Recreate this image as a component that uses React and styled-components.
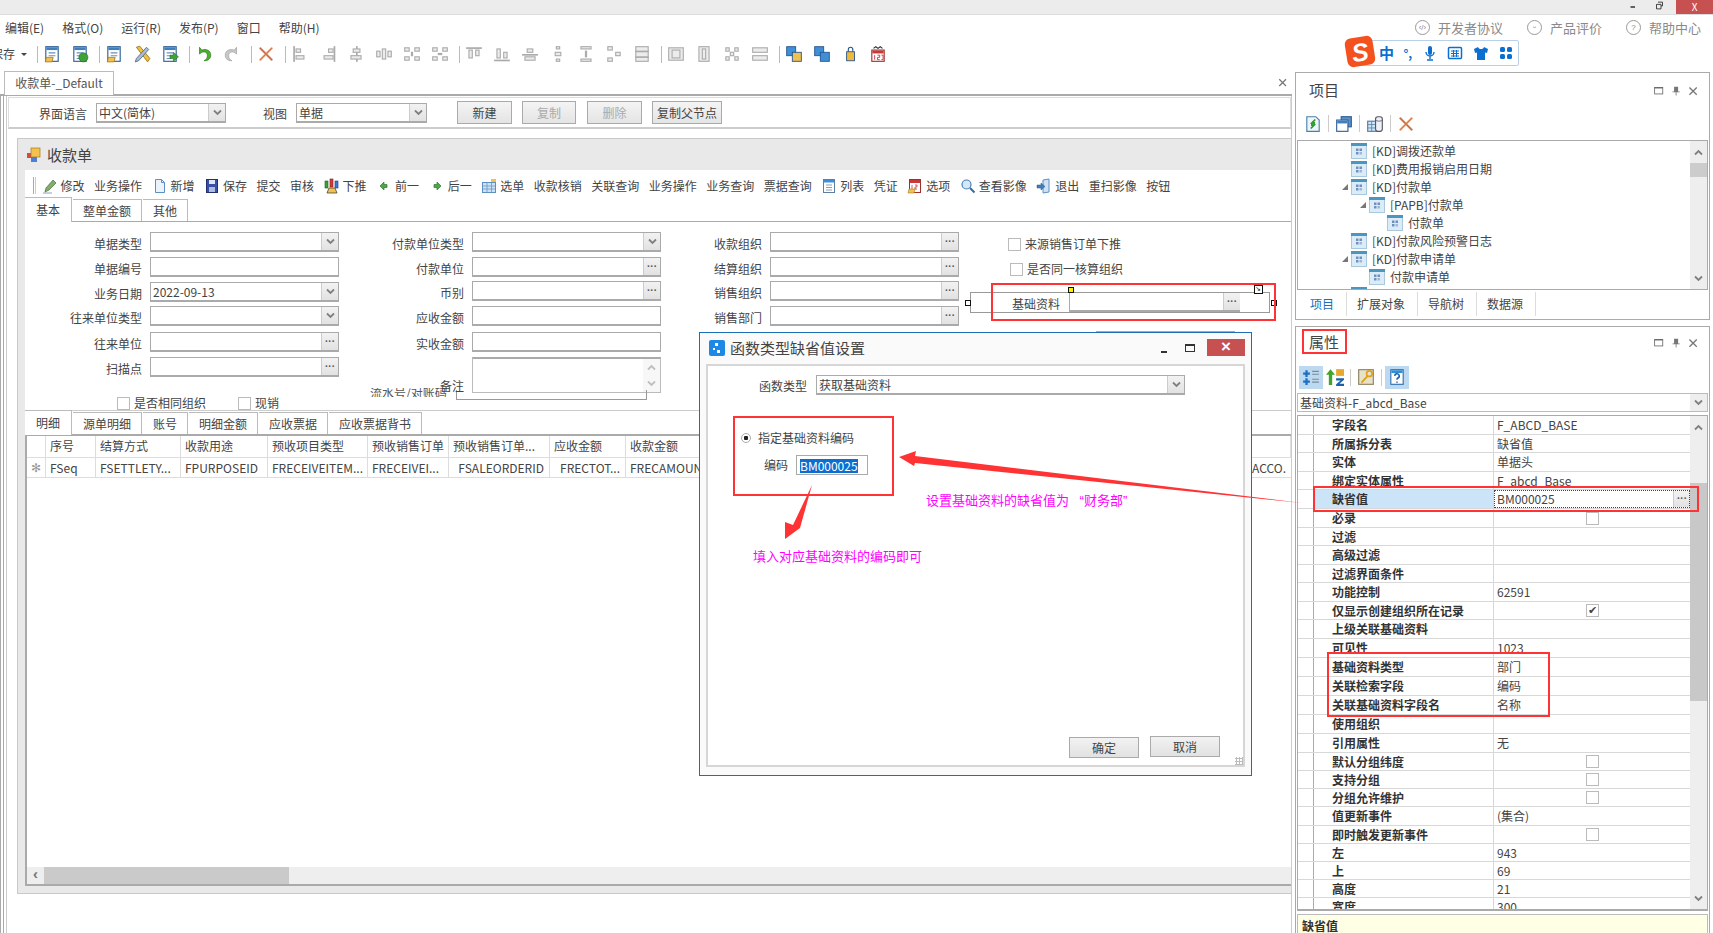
import React from 'react';
import styled, { createGlobalStyle } from 'styled-components';

const GlobalStyle = createGlobalStyle`
  html, body { margin: 0; padding: 0; background: #fff; }
  * { box-sizing: border-box; }
`;

// ---------- data ----------
const MENUS = ['编辑(E)', '格式(O)', '运行(R)', '发布(P)', '窗口', '帮助(H)'];

const DOC_TOOLS = [
  { icon: 'pencil', text: '修改' },
  { text: '业务操作' },
  { icon: 'page', text: '新增' },
  { icon: 'save', text: '保存' },
  { text: '提交' },
  { text: '审核' },
  { icon: 'push', text: '下推' },
  { icon: 'left', text: '前一' },
  { icon: 'right', text: '后一' },
  { icon: 'table', text: '选单' },
  { text: '收款核销' },
  { text: '关联查询' },
  { text: '业务操作' },
  { text: '业务查询' },
  { text: '票据查询' },
  { icon: 'form', text: '列表' },
  { text: '凭证' },
  { icon: 'calendar', text: '选项' },
  { icon: 'search', text: '查看影像' },
  { icon: 'exit', text: '退出' },
  { text: '重扫影像' },
  { text: '按钮' },
];

const COL_ONE = [
  { label: '单据类型', kind: 'combo', mt: 0 },
  { label: '单据编号', kind: 'text', mt: 5 },
  { label: '业务日期', kind: 'combo', value: '2022-09-13', mt: 5 },
  { label: '往来单位类型', kind: 'combo', mt: 4 },
  { label: '往来单位', kind: 'lookup', mt: 6 },
  { label: '扫描点', kind: 'lookup', mt: 5 },
];

const COL_TWO = [
  { label: '付款单位类型', kind: 'combo', mt: 0 },
  { label: '付款单位', kind: 'lookup', mt: 5 },
  { label: '币别', kind: 'lookup', mt: 4 },
  { label: '应收金额', kind: 'text', mt: 5 },
  { label: '实收金额', kind: 'text', mt: 6 },
];

const COL_THREE = [
  { label: '收款组织', kind: 'lookup', mt: 0 },
  { label: '结算组织', kind: 'lookup', mt: 5 },
  { label: '销售组织', kind: 'lookup', mt: 4 },
  { label: '销售部门', kind: 'lookup', mt: 5 },
];

const DETAIL_COLS = [
  { w: 19, head: '', cell: '✻', center: true, dim: true },
  { w: 50, head: '序号', cell: 'FSeq' },
  { w: 85, head: '结算方式', cell: 'FSETTLETY...' },
  { w: 87, head: '收款用途', cell: 'FPURPOSEID' },
  { w: 100, head: '预收项目类型', cell: 'FRECEIVEITEM...' },
  { w: 81, head: '预收销售订单', cell: 'FRECEIVEI...' },
  { w: 101, head: '预收销售订单...', cell: 'FSALEORDERID', right: true },
  { w: 76, head: '应收金额', cell: 'FRECTOT...', right: true },
  { w: 90, head: '收款金额', cell: 'FRECAMOUNTFOR' },
  { w: 480, head: '', cell: '' },
  { w: 95, head: '', cell: 'FBANKACCO.', right: true },
];

const TREE = [
  { level: 0, text: '[KD]调拨还款单' },
  { level: 0, text: '[KD]费用报销启用日期' },
  { level: 0, text: '[KD]付款单', open: true },
  { level: 1, text: '[PAPB]付款单', open: true },
  { level: 2, text: '付款单' },
  { level: 0, text: '[KD]付款风险预警日志' },
  { level: 0, text: '[KD]付款申请单', open: true },
  { level: 1, text: '付款申请单' },
  { level: 0, text: '' },
];

const PROPS = [
  { name: '字段名', value: 'F_ABCD_BASE', h: 19 },
  { name: '所属拆分表', value: '缺省值', h: 18 },
  { name: '实体', value: '单据头', h: 19 },
  { name: '绑定实体属性', value: 'F_abcd_Base', h: 18 },
  { name: '缺省值', value: 'BM000025', h: 19, editing: true },
  { name: '必录', check: 'off', h: 19 },
  { name: '过滤', h: 18 },
  { name: '高级过滤', h: 19 },
  { name: '过滤界面条件', h: 18 },
  { name: '功能控制', value: '62591', h: 19 },
  { name: '仅显示创建组织所在记录', check: 'on', h: 18 },
  { name: '上级关联基础资料', h: 19 },
  { name: '可见性', value: '1023', h: 19 },
  { name: '基础资料类型', value: '部门', h: 19 },
  { name: '关联检索字段', value: '编码', h: 19 },
  { name: '关联基础资料字段名', value: '名称', h: 19 },
  { name: '使用组织', h: 19 },
  { name: '引用属性', value: '无', h: 19 },
  { name: '默认分组纬度', check: 'off', h: 18 },
  { name: '支持分组', check: 'off', h: 18 },
  { name: '分组允许维护', check: 'off', h: 18 },
  { name: '值更新事件', value: '(集合)', h: 19 },
  { name: '即时触发更新事件', check: 'off', h: 18 },
  { name: '左', value: '943', h: 18 },
  { name: '上', value: '69', h: 18 },
  { name: '高度', value: '21', h: 18 },
  { name: '宽度', value: '300', h: 18 },
];

// ---------- icons ----------
const Svg = ({ size = 16, children }) => (
  <svg width={size} height={size} viewBox="0 0 16 16" style={{ display: 'block', flexShrink: 0 }}>
    {children}
  </svg>
);

const GREY_ALIGN = [
  [[2, 1, 1, 14], [4, 3, 5, 4], [4, 9, 8, 4]],
  [[13, 1, 1, 14], [8, 3, 5, 4], [4, 9, 9, 4]],
  [[8, 1, 1, 14], [5, 3, 7, 4], [3, 9, 10, 4]],
  [[1, 5, 4, 6], [6, 3, 4, 10], [11, 5, 4, 6]],
  [[1, 2, 5, 4], [10, 2, 5, 4], [1, 10, 5, 4], [10, 10, 5, 4], [7, 6, 2, 4]],
  [[1, 2, 5, 4], [10, 2, 5, 4], [1, 10, 5, 4], [10, 10, 5, 4], [6, 7, 4, 2]],
  [[1, 2, 14, 1], [3, 4, 4, 8], [9, 4, 4, 6]],
  [[1, 13, 14, 1], [3, 3, 4, 9], [9, 6, 4, 6]],
  [[1, 8, 14, 1], [5, 3, 6, 4], [3, 10, 10, 4]],
  [[6, 1, 4, 3], [5, 6, 6, 4], [6, 12, 4, 3]],
  [[3, 1, 10, 3], [7, 5, 2, 6], [3, 12, 10, 3]],
  [[2, 1, 5, 4], [9, 6, 5, 4], [2, 11, 5, 4]],
  [[2, 1, 12, 14], [2, 5, 12, 1], [2, 10, 12, 1]],
  [[1, 2, 14, 12], [4, 4, 8, 8]],
  [[3, 1, 10, 14], [6, 3, 4, 10]],
  [[2, 2, 4, 4], [10, 2, 4, 4], [2, 10, 4, 4], [10, 10, 4, 4], [6, 6, 4, 4]],
  [[1, 2, 14, 5], [1, 9, 14, 5]],
];

const GreyAlign = ({ n }) => (
  <Svg size={18}>
    {GREY_ALIGN[n].map((r, i) => (
      <rect key={i} x={r[0] + 0.5} y={r[1] + 0.5} width={r[2] - 1 > 0 ? r[2] - 1 : 0.5} height={r[3] - 1 > 0 ? r[3] - 1 : 0.5} fill="#ececec" stroke="#ababab" />
    ))}
  </Svg>
);

const FormDoc = ({ badge }) => (
  <Svg size={18}>
    <rect x="2.5" y="1.5" width="11" height="13" fill="#fff" stroke="#2e5f94" />
    <rect x="3" y="2" width="10" height="2.5" fill="#3f7fc0" />
    <path d="M5 7h6M5 9.5h6M5 12h4" stroke="#6a8fb5" />
    {badge === 'folder' && <path d="M3 11h6l-1 4H2z" fill="#f2c14e" stroke="#a9781a" strokeWidth=".7" />}
    {badge === 'info' && <circle cx="11" cy="11" r="4" fill="#3fa33a" stroke="#1f6e1c" strokeWidth=".6" />}
    {badge === 'arrow' && <path d="M8 9h3V6.5L15.5 10.5 11 14.5V12H8z" fill="#3fa33a" stroke="#1f6e1c" strokeWidth=".5" />}
  </Svg>
);

const RefreshDoc = () => (
  <Svg size={18}>
    <path d="M2.500 1.500h8l3 3v10h-11z" fill="#eef6fb" stroke="#4a7fa8" />
    <path d="M10 4l-3 3h2v1.500M6 12l3-3H7V7.500" fill="none" stroke="#2e9a2e" strokeWidth="1.500" />
  </Svg>
);

const StackWindows = () => (
  <Svg size={18}>
    <rect x="5.500" y="1.500" width="9" height="9" fill="#5f8fc8" stroke="#2e5f94" />
    <rect x="1.500" y="4.500" width="10" height="10" fill="#fff" stroke="#2e5f94" />
    <rect x="2" y="5" width="9" height="2.500" fill="#3f7fc0" />
  </Svg>
);

const TableDb = () => (
  <Svg size={18}>
    <rect x="1.500" y="5.500" width="9" height="9" fill="#d4e4f4" stroke="#4a7fa8" />
    <path d="M1.500 8.500h9M1.500 11.500h9M5 5.500v9" stroke="#4a7fa8" strokeWidth=".7" />
    <rect x="8.500" y="1.500" width="6" height="13" rx="2" fill="#eef2f6" stroke="#556" />
    <path d="M8.500 4a3 1.500 0 0 0 6 0" fill="none" stroke="#556" strokeWidth=".7" />
  </Svg>
);

const Tools = () => (
  <Svg size={18}>
    <path d="M3 2l3-1 9 11-2 3z" fill="#f0c040" stroke="#8f6a10" strokeWidth=".7" />
    <path d="M12 2l2 2-9 10-3 1 1-3z" fill="#a9bcd4" stroke="#4a5f7c" strokeWidth=".7" />
  </Svg>
);

const Undo = ({ color, stroke }) => (
  <Svg size={18}>
    <path d="M4 2v6l2-1.5c3-1 5 0 5 3 0 2-1 3.5-3 4.5 4 0 6-2 6-5 0-4-4-6-8-4.5L4 2z" fill={color} stroke={stroke} strokeWidth=".6" />
  </Svg>
);

const Redo = () => (
  <Svg size={18}>
    <path d="M12 2v6l-2-1.5c-3-1-5 0-5 3 0 2 1 3.5 3 4.5-4 0-6-2-6-5 0-4 4-6 8-4.5L12 2z" fill="#c8c8c8" stroke="#a0a0a0" strokeWidth=".6" />
  </Svg>
);

const CrossOrange = () => (
  <Svg size={18}>
    <path d="M2.500 2.500l11 11" stroke="#d9855a" strokeWidth="2" />
    <path d="M13.500 2.500l-11 11" stroke="#e8a078" strokeWidth="2" />
    <path d="M2.500 2.500l11 11M13.500 2.500l-11 11" stroke="#b85a30" strokeWidth=".5" />
  </Svg>
);

const LayerIcon = ({ tone }) => (
  <Svg size={18}>
    <rect x={tone === 'lock' ? 5 : 1.5} y={tone === 'lock' ? 6 : 1.5} width={tone === 'lock' ? 7 : 8} height={tone === 'lock' ? 8 : 8} fill={tone === 'lock' ? '#f0b93a' : '#3f8fd8'} stroke="#27568c" strokeWidth=".8" />
    {tone === 'lock' && <path d="M6.500 6V4a2 2 0 0 1 4 0v2" fill="none" stroke="#27568c" />}
    {tone !== 'lock' && <rect x="6.500" y="6.500" width="8" height="8" fill={tone === 'b' ? '#3f8fd8' : '#f0c050'} stroke="#27568c" strokeWidth=".8" />}
  </Svg>
);

const CalendarIcon = () => (
  <Svg size={18}>
    <rect x="2.500" y="4.500" width="11" height="10" fill="#fff" stroke="#a03030" />
    <rect x="3" y="5" width="10" height="2.500" fill="#c83838" />
    <path d="M4 3l2-1.500L8 3l2-1.500L12 3" fill="none" stroke="#333" />
    <path d="M5 9v4M7.500 9h2v2h-2v2h2M11 9h1.500v4H11" fill="none" stroke="#c83838" strokeWidth=".8" />
  </Svg>
);

const DocToolIcon = ({ type }) => {
  switch (type) {
    case 'pencil':
      return <Svg><path d="M11 2l3 3-7 7-4 2 1-4z" fill="#7fb069" stroke="#4a6a3c" strokeWidth=".7" /><path d="M1 15h9" stroke="#8aa0b8" /></Svg>;
    case 'page':
      return <Svg><path d="M3.500 1.500h6l3 3v10h-9z" fill="#eaf3fc" stroke="#5d8fc2" /><path d="M9.500 1.500v3h3" fill="none" stroke="#5d8fc2" /></Svg>;
    case 'save':
      return <Svg><rect x="2.500" y="1.500" width="11" height="13" fill="#3a4fa8" stroke="#232f6e" /><rect x="5" y="2" width="6" height="4" fill="#dfe6f5" /><rect x="5" y="9" width="6" height="5" fill="#aebce0" /></Svg>;
    case 'push':
      return <Svg><rect x="1" y="3" width="3" height="7" fill="#3aa23a" stroke="#1c5e1c" strokeWidth=".6" /><rect x="6" y="1" width="3" height="8" fill="#d83a3a" stroke="#7e1b1b" strokeWidth=".6" /><rect x="11" y="3" width="3" height="7" fill="#3a7ad8" stroke="#1b3e7e" strokeWidth=".6" /><path d="M5 10h6l2 5H3z" fill="#f2c14e" stroke="#333" strokeWidth=".7" /></Svg>;
    case 'left':
      return <Svg><path d="M8 4v2.500h3v3H8V12L4 8z" fill="#4aa84a" stroke="#2e7a2e" strokeWidth=".7" /></Svg>;
    case 'right':
      return <Svg><path d="M8 4v2.500H5v3h3V12l4-4z" fill="#4aa84a" stroke="#2e7a2e" strokeWidth=".7" /></Svg>;
    case 'table':
      return <Svg><rect x="1.500" y="4.500" width="13" height="10" fill="#cfe2f5" stroke="#5d8fc2" /><path d="M1.500 8h13M1.500 11h13M6 4.500v10M10.500 4.500v10" stroke="#5d8fc2" strokeWidth=".7" /><rect x="10" y="1" width="5" height="3" fill="#f2c14e" /></Svg>;
    case 'form':
      return <Svg><rect x="2.500" y="1.500" width="11" height="13" fill="#fff" stroke="#5d7fa5" /><rect x="3" y="2" width="10" height="2.500" fill="#3f8fd8" /><path d="M5 7h6M5 9.500h6M5 12h6" stroke="#8aa0b8" /></Svg>;
    case 'calendar':
      return <Svg><rect x="2.500" y="1.500" width="11" height="13" fill="#fff" stroke="#a03030" /><rect x="3" y="2" width="10" height="3" fill="#c83838" /><path d="M5 7v4M8 7h2v2H8v2h2" fill="none" stroke="#c83838" strokeWidth=".8" /><path d="M2 11h6l-1 4H1z" fill="#f2c14e" stroke="#a9781a" strokeWidth=".6" /></Svg>;
    case 'search':
      return <Svg><circle cx="6.500" cy="6.500" r="4.500" fill="#d4e8f8" stroke="#4a80b8" strokeWidth="1.200" /><path d="M10 10l4.500 4.500" stroke="#3a6a9c" strokeWidth="2" /></Svg>;
    case 'exit':
      return <Svg><path d="M7 2l6-1v13l-6 1z" fill="#cfe2f5" stroke="#5d8fc2" /><path d="M1 7h4V5l4 3.500L5 12v-2H1z" fill="#3f7fc0" stroke="#27568c" strokeWidth=".5" /></Svg>;
    default:
      return null;
  }
};

const TreeGlyph = () => (
  <Svg>
    <rect x=".5" y=".5" width="15" height="15" fill="#dcecf7" stroke="#a8c8de" />
    <rect x="0" y="0" width="16" height="3" fill="#4a96bf" />
    <rect x="5" y="5.500" width="2.500" height="2.500" fill="#6f8fc0" />
    <rect x="8.500" y="5.500" width="2.500" height="2.500" fill="#6f8fc0" />
    <rect x="5" y="9" width="2.500" height="2.500" fill="#6f8fc0" />
    <rect x="8.500" y="9" width="2.500" height="2.500" fill="#a0b6d8" />
  </Svg>
);

const Chevron = ({ dir = 'down' }) => (
  <svg width="9" height="7" viewBox="0 0 9 7" style={{ display: 'block' }}>
    <path d={dir === 'down' ? 'M1 1.500l3.500 3.500L8 1.500' : 'M1 5.500L4.500 2 8 5.500'} fill="none" stroke="#808080" strokeWidth="1.800" />
  </svg>
);

const PanelButtons = () => (
  <PanelCtl>
    <Svg size={13}><rect x="2" y="3" width="10" height="8" fill="none" stroke="#666" /><path d="M2 3.500h10" stroke="#666" strokeWidth="1.500" /></Svg>
    <Svg size={13}><path d="M5 2h5v6h2v1H8v4H7V9H3V8h2z" fill="#777" /></Svg>
    <Svg size={13}><path d="M3 3l9 9M12 3l-9 9" stroke="#777" strokeWidth="1.600" /></Svg>
  </PanelCtl>
);

// ---------- small composites ----------
const Field = ({ label, kind, value, mt, $labelW }) => (
  <FieldRow $mt={mt}>
    <FieldLabel $w={$labelW}>{label}</FieldLabel>
    <InputBox>
      <InputText>{value}</InputText>
      {kind === 'combo' && <SideBtn><Chevron /></SideBtn>}
      {kind === 'lookup' && <SideBtn>···</SideBtn>}
    </InputBox>
  </FieldRow>
);

const Combo = ({ w, value, h }) => (
  <InputBox $w={w} $h={h}>
    <InputText>{value}</InputText>
    <SideBtn><Chevron /></SideBtn>
  </InputBox>
);

const App = () => (
  <Page>
    <GlobalStyle />
    <TitleBar>
      <WinBtn>
        <Svg size={12}><rect x="2" y="7" width="6" height="2" fill="#333" /></Svg>
      </WinBtn>
      <WinBtn>
        <Svg size={12}><path d="M4 1.500h6v5H8M2 4.500h6v6H2z" fill="none" stroke="#333" strokeWidth="1.200" /></Svg>
      </WinBtn>
      <TitleClose>X</TitleClose>
    </TitleBar>

    <MenuBar>
      <MenuList>
        {MENUS.map((m) => <MenuItem key={m}>{m}</MenuItem>)}
      </MenuList>
      <HelpLinks>
        <HelpLink><HelpDot>‹/›</HelpDot>开发者协议</HelpLink>
        <HelpLink><HelpDot>ᵕ</HelpDot>产品评价</HelpLink>
        <HelpLink><HelpDot>?</HelpDot>帮助中心</HelpLink>
      </HelpLinks>
    </MenuBar>

    <ToolBar>
      <SaveLabel>保存</SaveLabel>
      <Caret />
      <ToolSep />
      <ToolSlot><FormDoc badge="folder" /></ToolSlot>
      <ToolSlot><FormDoc badge="info" /></ToolSlot>
      <ToolSep />
      <ToolSlot><FormDoc badge="folder" /></ToolSlot>
      <ToolSlot><Tools /></ToolSlot>
      <ToolSlot><FormDoc badge="arrow" /></ToolSlot>
      <ToolSep />
      <ToolSlot><Undo color="#4caf2e" stroke="#2e7a18" /></ToolSlot>
      <ToolSlot><Redo /></ToolSlot>
      <ToolSep />
      <ToolSlot><CrossOrange /></ToolSlot>
      <ToolSep />
      {[0, 1, 2, 3, 4, 5].map((n) => <ToolSlot key={n}><GreyAlign n={n} /></ToolSlot>)}
      <ToolSep />
      {[6, 7, 8, 9, 10, 11, 12].map((n) => <ToolSlot key={n}><GreyAlign n={n} /></ToolSlot>)}
      <ToolSep />
      {[13, 14, 15, 16].map((n) => <ToolSlot key={n}><GreyAlign n={n} /></ToolSlot>)}
      <ToolSep />
      <ToolSlot><LayerIcon tone="a" /></ToolSlot>
      <ToolSlot><LayerIcon tone="b" /></ToolSlot>
      <ToolSlot><LayerIcon tone="lock" /></ToolSlot>
      <ToolSlot><CalendarIcon /></ToolSlot>
    </ToolBar>

    <Workspace>
      <DocArea>
        <TabStrip>
          <DocTab>收款单-_Default</DocTab>
          <StripClose>
            <Svg size={12}><path d="M3 3l9 9M12 3l-9 9" stroke="#777" strokeWidth="1.600" /></Svg>
          </StripClose>
        </TabStrip>
        <DocBody>
          <LangBar>
            <LangLabel>界面语言</LangLabel>
            <Combo w={130} h={20} value="中文(简体)" />
            <LangLabel $ml={37}>视图</LangLabel>
            <Combo w={131} h={20} value="单据" />
            <FlatButton $w={55} $ml={30}>新建</FlatButton>
            <FlatButton $w={54} $ml={10} $off>复制</FlatButton>
            <FlatButton $w={55} $ml={11} $off>删除</FlatButton>
            <FlatButton $w={70} $ml={10}>复制父节点</FlatButton>
          </LangBar>

          <BillPanel>
            <BillHeader>
              <Svg>
                <rect x="1" y="6" width="5" height="5" fill="#d84a3a" />
                <rect x="5" y="1" width="9" height="9" fill="#f2c14e" stroke="#a9781a" strokeWidth=".7" />
                <rect x="5" y="10" width="6" height="5" fill="#4a80d8" />
              </Svg>
              <BillTitle>收款单</BillTitle>
            </BillHeader>
            <BillBody>
              <DocToolbar>
                <Grip />
                {DOC_TOOLS.map((t, i) => (
                  <DocTool key={i}>
                    {t.icon && <DocToolIcon type={t.icon} />}
                    {t.text}
                  </DocTool>
                ))}
              </DocToolbar>

              <TabRow>
                <TabItem $active>基本</TabItem>
                <TabItem>整单金额</TabItem>
                <TabItem>其他</TabItem>
              </TabRow>

              <FormArea>
                <FormColumn>
                  {COL_ONE.map((f) => <Field key={f.label} {...f} $labelW={117} />)}
                  <CheckLine $ml={92} $mt={18}>
                    <CheckBox />是否相同组织
                    <CheckBox $ml={28} />现销
                  </CheckLine>
                </FormColumn>
                <FormColumn $ml={11}>
                  {COL_TWO.map((f) => <Field key={f.label} {...f} $labelW={114} />)}
                  <FieldRow $mt={5}>
                    <NoteLabel>备注</NoteLabel>
                    <NoteBox>
                      <NoteScroll><Chevron dir="up" /><Chevron /></NoteScroll>
                    </NoteBox>
                  </FieldRow>
                </FormColumn>
                <FormColumn $ml={19}>
                  {COL_THREE.map((f) => <Field key={f.label} {...f} $labelW={82} />)}
                </FormColumn>
                <FormColumn $ml={49}>
                  <CheckLine $mt={4}><CheckBox />来源销售订单下推</CheckLine>
                  <CheckLine $mt={9} $ml={2}><CheckBox />是否同一核算组织</CheckLine>
                </FormColumn>
                <SerialField>
                  <SerialText>流水号/对账码</SerialText>
                </SerialField>
                <SerialBox />
              </FormArea>

              <TabRow $thick>
                <TabItem $active>明细</TabItem>
                <TabItem>源单明细</TabItem>
                <TabItem>账号</TabItem>
                <TabItem>明细金额</TabItem>
                <TabItem>应收票据</TabItem>
                <TabItem>应收票据背书</TabItem>
              </TabRow>

              <GridArea>
                <GridRow $h={22}>
                  {DETAIL_COLS.map((c, i) => <GridCell key={i} $w={c.w}>{c.head}</GridCell>)}
                </GridRow>
                <GridRow $h={20}>
                  {DETAIL_COLS.map((c, i) => (
                    <GridCell key={i} $w={c.w} $right={c.right} $center={c.center} $dim={c.dim} $noLine={i >= 8}>{c.cell}</GridCell>
                  ))}
                </GridRow>
                <GridSpacer />
                <HScroll>
                  <HArrow>‹</HArrow>
                  <HThumb />
                </HScroll>
              </GridArea>
            </BillBody>
          </BillPanel>
        </DocBody>
      </DocArea>

      <SidePane>
        <ProjectPanel>
          <PanelHead>
            <PanelTitle>项目</PanelTitle>
            <PanelButtons />
          </PanelHead>
          <SideTools>
            <SideSlot><RefreshDoc /></SideSlot>
            <SideSep />
            <SideSlot><StackWindows /></SideSlot>
            <SideSep />
            <SideSlot><TableDb /></SideSlot>
            <SideSep />
            <SideSlot><CrossOrange /></SideSlot>
          </SideTools>
          <TreeBox>
            <TreeList>
              {TREE.map((n, i) => (
                <TreeRow key={i} $level={n.level}>
                  <TreeArrow $show={n.open} />
                  <TreeGlyph />
                  {n.text && <TreeText>{n.text}</TreeText>}
                </TreeRow>
              ))}
            </TreeList>
            <VScroll>
              <VArrow><Chevron dir="up" /></VArrow>
              <TreeThumb />
              <VFill />
              <VArrow><Chevron /></VArrow>
            </VScroll>
          </TreeBox>
          <SideTabs>
            <SideTab $active>项目</SideTab>
            <SideTab>扩展对象</SideTab>
            <SideTab>导航树</SideTab>
            <SideTab>数据源</SideTab>
          </SideTabs>
        </ProjectPanel>

        <PropsPanel>
          <PanelHead $pb={7}>
            <PanelTitle>属性</PanelTitle>
            <PanelButtons />
          </PanelHead>
          <PropTools>
            <PropToggle>
              <Svg size={18}><path d="M3 2h2v2h2v2H5v2H3V6H1V4h2zM3 9h2v2h2v2H5v2H3v-2H1v-2h2z" fill="#1d6fc4" /><path d="M9 3h6M9 5.500h6M9 10h6M9 12.500h6" stroke="#7a8a9a" /></Svg>
            </PropToggle>
            <PropSlot>
              <Svg size={18}><path d="M4 1l4 5H5.500v9h-3V6H0z" fill="#43a32c" /><rect x="9" y="1" width="7" height="6" fill="#e8a830" /><path d="M9 9h7v1.500L12 14h4v2H9v-1.500L13 11H9z" fill="#1d5fa8" /></Svg>
            </PropSlot>
            <PropSep />
            <PropSlot $ml={5}>
              <Svg size={18}><rect x="1.500" y="1.500" width="13" height="13" fill="#e8e2c8" stroke="#8a8060" /><circle cx="11" cy="5" r="2.500" fill="none" stroke="#e0a020" strokeWidth="1.500" /><path d="M9.500 7L4 13" stroke="#e0a020" strokeWidth="1.600" /></Svg>
            </PropSlot>
            <PropSep />
            <PropToggle $ml={3}>
              <Svg size={18}><rect x="2.500" y="1.500" width="11" height="13" fill="#fff" stroke="#2e6fb5" /><rect x="3" y="2" width="10" height="2.500" fill="#2e8fd8" /><path d="M6 7a2 2 0 1 1 2.500 2c-.5.3-.5.700-.5 1.500M8 12v1" fill="none" stroke="#1d5fa8" strokeWidth="1.400" /></Svg>
            </PropToggle>
          </PropTools>
          <ObjectCombo>
            <ObjectText>基础资料-F_abcd_Base</ObjectText>
            <ObjectBtn><Chevron /></ObjectBtn>
          </ObjectCombo>
          <PropGrid>
            <PropRows>
              {PROPS.map((p) => (
                <PropRow key={p.name} $h={p.h}>
                  <PropGutter />
                  <PropName $hl={p.editing}>{p.name}</PropName>
                  <PropValue $editing={p.editing}>
                    {p.value}
                    {p.editing && <SideBtn $grid>···</SideBtn>}
                    {p.check && <PropCheck $on={p.check === 'on'}>{p.check === 'on' && '✔'}</PropCheck>}
                  </PropValue>
                </PropRow>
              ))}
            </PropRows>
            <VScroll>
              <VArrow><Chevron dir="up" /></VArrow>
              <GridThumb />
              <VFill />
              <VArrow><Chevron /></VArrow>
            </VScroll>
          </PropGrid>
          <DescBox>缺省值</DescBox>
        </PropsPanel>
      </SidePane>
    </Workspace>

    {/* 设计器里选中的控件，浮在表单上 */}
    <PickedField>
      <PickedLabel>基础资料</PickedLabel>
      <PickedInput><SideBtn>···</SideBtn></PickedInput>
    </PickedField>
    <Handle $x={965} $y={300} />
    <Handle $x={1271} $y={300} />
    <Handle $x={1068} $y={287} $yellow />
    <PickedCorner>↘</PickedCorner>
    <HiddenWidget />

    <Dialog>
      <DialogHead>
        <DialogIcon>
          <Svg>
            <rect width="16" height="16" rx="2" fill="#1e88e5" />
            <rect x="6" y="3" width="3" height="3" fill="#fff" />
            <rect x="4" y="8" width="2" height="2" fill="#fff" />
            <rect x="8" y="10" width="3" height="3" fill="#fff" />
          </Svg>
        </DialogIcon>
        <DialogTitle>函数类型缺省值设置</DialogTitle>
        <DialogMin />
        <DialogMax />
        <DialogClose>×</DialogClose>
      </DialogHead>
      <DialogBody>
        <DialogField>
          <DialogLabel>函数类型</DialogLabel>
          <Combo w={369} h={20} value="获取基础资料" />
        </DialogField>
        <RadioLine>
          <Radio />
          指定基础资料编码
        </RadioLine>
        <CodeLine>
          <span>编码</span>
          <CodeInput><CodeSelected>BM000025</CodeSelected></CodeInput>
        </CodeLine>
        <DialogFoot>
          <DialogBtn>确定</DialogBtn>
          <DialogBtn $up>取消</DialogBtn>
        </DialogFoot>
        <ResizeGrip />
      </DialogBody>
    </Dialog>

    <RedBox $x={991} $y={283} $w={285} $h={38} />
    <RedBox $x={733} $y={416} $w={161} $h={80} />
    <RedBox $x={1302} $y={329} $w={45} $h={25} />
    <RedBox $x={1313} $y={486} $w={386} $h={26} />
    <RedBox $x={1327} $y={652} $w={223} $h={65} />

    <Arrows width="1713" height="933" viewBox="0 0 1713 933">
      <polygon points="899,457 916,451 915,456 1302,503 915,463 914,466" fill="#ff3333" />
      <polygon points="812,485 800,528 785,539 785,522 793,525" fill="#ff3333" />
    </Arrows>
    <Note $x={926} $y={493}>设置基础资料的缺省值为 “财务部”</Note>
    <Note $x={753} $y={549}>填入对应基础资料的编码即可</Note>

    <ImeBar>
      <ImeLogo><ImeS>S</ImeS></ImeLogo>
      <ImeChar>中</ImeChar>
      <ImeChar $small>°,</ImeChar>
      <Svg><rect x="6" y="1" width="4" height="9" rx="2" fill="#0a6fd0" /><path d="M4 7a4 4 0 0 0 8 0M8 11v3M5 15h6" fill="none" stroke="#0a6fd0" strokeWidth="1.400" /></Svg>
      <Svg><rect x="1.500" y="2.500" width="13" height="11" rx="1" fill="none" stroke="#0a6fd0" strokeWidth="1.500" /><path d="M4 6h8M4 8.500h8M4 11h8M6.500 5v7M9.500 5v7" stroke="#0a6fd0" /></Svg>
      <Svg><path d="M5 2L1 4l1 4 2-.5V15h8V7.500l2 .5 1-4-4-2c-.5 1.500-1.500 2-3 2s-2.500-.5-3-2z" fill="#0a6fd0" /></Svg>
      <Svg><rect x="2" y="2" width="5" height="5" rx="1.500" fill="#0a6fd0" /><rect x="9" y="2" width="5" height="5" rx="1.500" fill="#0a6fd0" /><rect x="2" y="9" width="5" height="5" rx="1.500" fill="#0a6fd0" /><rect x="9" y="9" width="5" height="5" rx="1.500" fill="#0a6fd0" /></Svg>
    </ImeBar>
  </Page>
);

// ---------- page frame ----------
const Page = styled.div`
  position: relative;
  width: 1713px;
  height: 933px;
  overflow: hidden;
  background: #fff;
  color: #444;
  font: 12px/16px "Noto Sans CJK SC", "Liberation Sans", sans-serif;
`;

const TitleBar = styled.div`
  height: 15px;
  background: #ececec;
  border-bottom: 1px solid #dcdcdc;
  display: flex;
  justify-content: flex-end;
`;

const WinBtn = styled.div`
  width: 26px;
  height: 14px;
  display: flex;
  align-items: center;
  justify-content: center;
`;

const TitleClose = styled.div`
  width: 37px;
  height: 14px;
  margin-left: 2px;
  background: #c75050;
  color: #fff;
  font-size: 10px;
  line-height: 14px;
  text-align: center;
`;

const MenuBar = styled.div`
  height: 25px;
  padding-left: 5px;
  display: flex;
  align-items: center;
  justify-content: space-between;
`;

const MenuList = styled.div`
  display: flex;
  gap: 18px;
`;

const MenuItem = styled.span`
  color: #444;
`;

const HelpLinks = styled.div`
  display: flex;
  gap: 24px;
  padding-right: 12px;
  font-size: 13px;
  color: #8a8a8a;
`;

const HelpLink = styled.span`
  display: flex;
  align-items: center;
  gap: 8px;
`;

const HelpDot = styled.i`
  width: 15px;
  height: 15px;
  border: 1px solid #999;
  border-radius: 50%;
  font: 8px/13px "Liberation Sans", sans-serif;
  text-align: center;
  color: #888;
`;

const ToolBar = styled.div`
  height: 31px;
  display: flex;
  align-items: center;
  padding-bottom: 3px;
`;

const SaveLabel = styled.span`
  margin-left: -9px;
  width: 29px;
`;

const Caret = styled.i`
  width: 0;
  height: 0;
  margin-left: 1px;
  margin-right: 5px;
  border-left: 3px solid transparent;
  border-right: 3px solid transparent;
  border-top: 3px solid #444;
`;

const ToolSep = styled.i`
  width: 1px;
  height: 17px;
  margin-left: 5px;
  background: #bbb;
`;

const ToolSlot = styled.div`
  width: 28px;
  display: flex;
  justify-content: center;
`;

const Workspace = styled.div`
  height: 862px;
  display: flex;
`;

// ---------- document side ----------
const DocArea = styled.div`
  width: 1292px;
  display: flex;
  flex-direction: column;
`;

const TabStrip = styled.div`
  height: 25px;
  padding-left: 4px;
  display: flex;
  justify-content: space-between;
  border-bottom: 2px solid #aaa;
`;

const DocTab = styled.div`
  width: 110px;
  height: 24px;
  background: #fff;
  border: 1px solid #bbb;
  border-bottom: 0;
  text-align: center;
  line-height: 22px;
  color: #555;
`;

const StripClose = styled.span`
  padding: 6px 3px 0 0;
`;

const DocBody = styled.div`
  flex: 1;
  padding-left: 8px;
  border-right: 1px solid #ccc;
  box-shadow: inset 1px 0 #aaa, inset 3px 0 #fff, inset 4px 0 #aaa, inset 6px 0 #fff, inset 7px 0 #ccc;
`;

const LangBar = styled.div`
  height: 32px;
  margin-top: 1px;
  border: 1px solid #ddd;
  border-bottom: 2px solid #ccc;
  display: flex;
  align-items: center;
  padding-left: 30px;
`;

const LangLabel = styled.span`
  margin-left: ${(p) => p.$ml || 0}px;
  margin-right: 9px;
  padding-top: 2px;
`;

const FlatButton = styled.div`
  width: ${(p) => p.$w}px;
  height: 23px;
  margin-left: ${(p) => p.$ml}px;
  background: linear-gradient(#f4f4f4, #e4e4e4);
  border: 1px solid #aaa;
  text-align: center;
  line-height: 21px;
  color: ${(p) => (p.$off ? '#aaa' : '#444')};
`;

const BillPanel = styled.div`
  height: 756px;
  margin: 9px 0 0 9px;
  background: #e9e9e9;
  border: 1px solid #c8c8c8;
  border-right: 0;
  display: flex;
  flex-direction: column;
`;

const BillHeader = styled.div`
  height: 31px;
  flex-shrink: 0;
  padding-left: 8px;
  display: flex;
  align-items: center;
  gap: 5px;
`;

const BillTitle = styled.span`
  font-size: 15px;
  color: #444;
`;

const BillBody = styled.div`
  flex: 1;
  margin: 0 0 7px 7px;
  background: #fff;
  display: flex;
  flex-direction: column;
`;

const DocToolbar = styled.div`
  height: 27px;
  flex-shrink: 0;
  padding-left: 8px;
  display: flex;
  align-items: center;
  gap: 9.5px;
  white-space: nowrap;
  padding-top: 4px;
`;

const Grip = styled.i`
  width: 3px;
  height: 17px;
  margin-right: -4px;
  border-left: 1px solid #aaa;
  border-right: 1px solid #ccc;
`;

const DocTool = styled.span`
  display: flex;
  align-items: center;
  gap: 3px;
  color: #444;
`;

const TabRow = styled.div`
  height: 25px;
  flex-shrink: 0;
  display: flex;
  gap: 1px;
  align-items: flex-end;
  border-top: ${(p) => (p.$thick ? '1px solid #ccc' : '0')};
  border-bottom: 1px solid #aaa;
`;

const TabItem = styled.div`
  height: ${(p) => (p.$active ? 25 : 22)}px;
  padding: 0 ${(p) => (p.$active ? 11 : 10)}px;
  line-height: ${(p) => (p.$active ? 24 : 22)}px;
  background: #fff;
  border: solid #bbb;
  border-width: 1px 1px 0 0;
  margin-bottom: ${(p) => (p.$active ? -1 : 0)}px;
  position: relative;
  color: #444;
`;

const FormArea = styled.div`
  position: relative;
  height: 188px;
  flex-shrink: 0;
  padding-top: 10px;
  display: flex;
`;

const FormColumn = styled.div`
  margin-left: ${(p) => p.$ml || 0}px;
  display: flex;
  flex-direction: column;
`;

const FieldRow = styled.div`
  margin-top: ${(p) => p.$mt || 0}px;
  display: flex;
  align-items: flex-start;
  gap: 8px;
`;

const FieldLabel = styled.span`
  width: ${(p) => p.$w}px;
  height: 20px;
  text-align: right;
  padding-top: 4px;
  color: #444;
`;

const InputBox = styled.div`
  width: ${(p) => p.$w || 189}px;
  height: ${(p) => p.$h || 20}px;
  background: #fff;
  border: 1px solid #aaa;
  border-bottom-width: 2px;
  display: flex;
  justify-content: space-between;
`;

const InputText = styled.span`
  padding-left: 2px;
  line-height: 18px;
  white-space: nowrap;
`;

const SideBtn = styled.span`
  width: 17px;
  height: ${(p) => (p.$grid ? 16 : 17)}px;
  margin-left: auto;
  flex-shrink: 0;
  background: linear-gradient(#f2f2f2, #e2e2e2);
  border-left: 1px solid #ccc;
  display: flex;
  align-items: center;
  justify-content: center;
  font: 700 10px/10px "Liberation Sans", sans-serif;
  color: #555;
`;

const NoteLabel = styled.span`
  width: 114px;
  height: 36px;
  padding-top: 21px;
  text-align: right;
  position: relative;
  z-index: 1;
`;

const NoteBox = styled.div`
  width: 189px;
  height: 36px;
  border: 1px solid #bbb;
  border-top: 2px solid #aaa;
  display: flex;
  justify-content: flex-end;
`;

const NoteScroll = styled.div`
  width: 17px;
  background: #f0f0f0;
  display: flex;
  flex-direction: column;
  align-items: center;
  justify-content: space-around;
  opacity: 0.5;
`;

const CheckLine = styled.label`
  margin: ${(p) => p.$mt || 0}px 0 0 ${(p) => p.$ml || 0}px;
  display: flex;
  align-items: center;
  gap: 4px;
  color: #444;
  white-space: nowrap;
`;

const CheckBox = styled.i`
  width: 13px;
  height: 13px;
  margin-left: ${(p) => p.$ml || 0}px;
  border: 1px solid #bbb;
  background: #fff;
`;

const SerialField = styled.div`
  position: absolute;
  left: 345px;
  top: 166px;
  width: 84px;
  height: 9px;
  overflow: hidden;
`;

const SerialText = styled.div`
  margin-top: -3px;
  color: #555;
  white-space: nowrap;
`;

const SerialBox = styled.div`
  position: absolute;
  left: 431px;
  top: 168px;
  width: 191px;
  height: 10px;
  border: 1px solid #999;
  border-top: 0;
`;

const GridArea = styled.div`
  flex: 1;
  border-top: 1px solid #aaa;
  border-left: 2px solid #aaa;
  border-bottom: 2px solid #aaa;
  display: flex;
  flex-direction: column;
  min-height: 0;
`;

const GridRow = styled.div`
  height: ${(p) => p.$h}px;
  flex-shrink: 0;
  display: flex;
  border-bottom: 1px solid #ddd;
`;

const GridCell = styled.div`
  width: ${(p) => p.$w}px;
  flex-shrink: 0;
  padding: 0 ${(p) => (p.$right ? 5 : 4)}px;
  border-right: ${(p) => (p.$noLine ? '0' : '1px solid #ddd')};
  font-family: ${(p) => (p.$dim ? '"DejaVu Sans", sans-serif' : 'inherit')};
  line-height: 20px;
  overflow: hidden;
  white-space: nowrap;
  text-align: ${(p) => (p.$right ? 'right' : p.$center ? 'center' : 'left')};
  color: ${(p) => (p.$dim ? '#999' : '#444')};
`;

const GridSpacer = styled.div`
  flex: 1;
`;

const HScroll = styled.div`
  height: 17px;
  flex-shrink: 0;
  background: #eee;
  display: flex;
`;

const HArrow = styled.div`
  width: 17px;
  text-align: center;
  font: 700 15px/14px "Liberation Sans", sans-serif;
  color: #777;
`;

const HThumb = styled.div`
  width: 245px;
  background: #cacaca;
`;

// ---------- right side ----------
const SidePane = styled.div`
  width: 415px;
  margin-left: 3px;
  padding-top: 1px;
  display: flex;
  flex-direction: column;
  gap: 6px;
`;

const ProjectPanel = styled.div`
  height: 248px;
  flex-shrink: 0;
  border: 1px solid #aaa;
  display: flex;
  flex-direction: column;
  padding: 0 1px;
`;

const PanelHead = styled.div`
  height: 36px;
  flex-shrink: 0;
  padding: 0 8px ${(p) => p.$pb || 3}px 12px;
  display: flex;
  align-items: center;
  justify-content: space-between;
`;

const PanelTitle = styled.span`
  font-size: 15px;
  color: #444;
`;

const PanelCtl = styled.div`
  display: flex;
  gap: 4px;
  margin-top: 3px;
`;

const SideTools = styled.div`
  height: 31px;
  padding: 0 0 2px 4px;
  display: flex;
  align-items: center;
`;

const SideSlot = styled.div`
  width: 24px;
  display: flex;
  justify-content: center;
`;

const SideSep = styled.i`
  width: 1px;
  height: 17px;
  margin: 0 3px;
  background: #ccc;
`;

const TreeBox = styled.div`
  height: 150px;
  flex-shrink: 0;
  border: 1px solid #aaa;
  display: flex;
  overflow: hidden;
`;

const TreeList = styled.div`
  flex: 1;
  padding-top: 1px;
`;

const TreeRow = styled.div`
  height: 18px;
  padding-left: ${(p) => 44 + p.$level * 18}px;
  display: flex;
  align-items: center;
`;

const TreeArrow = styled.i`
  width: 0;
  height: 0;
  margin-right: 3px;
  border-style: solid;
  border-width: 0 0 6px 6px;
  border-color: transparent transparent ${(p) => (p.$show ? '#777' : 'transparent')} transparent;
`;

const TreeText = styled.span`
  margin-left: 5px;
  color: #444;
  white-space: nowrap;
`;

const VScroll = styled.div`
  width: 17px;
  flex-shrink: 0;
  background: #eee;
  display: flex;
  flex-direction: column;
  align-items: center;
`;

const VArrow = styled.div`
  height: 22px;
  flex-shrink: 0;
  display: flex;
  align-items: center;
  justify-content: center;
`;

const VFill = styled.div`
  flex: 1;
`;

const TreeThumb = styled.div`
  width: 100%;
  height: 14px;
  background: #ccc;
`;

const GridThumb = styled.div`
  width: 100%;
  height: 218px;
  margin-top: 45px;
  background: #c8c8c8;
`;

const SideTabs = styled.div`
  height: 27px;
  display: flex;
  align-items: center;
  padding-left: 3px;
`;

const SideTab = styled.div`
  height: 24px;
  padding: 0 12px 0 10px;
  border-right: 1px solid #ddd;
  line-height: 24px;
  color: ${(p) => (p.$active ? '#1a6fb5' : '#444')};
`;

const PropsPanel = styled.div`
  flex: 1;
  min-height: 0;
  border: 1px solid #aaa;
  border-bottom: 0;
  padding: 0 1px;
  display: flex;
  flex-direction: column;
`;

const PropTools = styled.div`
  height: 28px;
  flex-shrink: 0;
  padding-left: 2px;
  display: flex;
  align-items: center;
`;

const PropToggle = styled.div`
  width: 24px;
  height: 23px;
  margin-left: ${(p) => p.$ml || 0}px;
  background: #bcd9f0;
  display: flex;
  align-items: center;
  justify-content: center;
`;

const PropSlot = styled.div`
  width: 20px;
  margin-left: ${(p) => p.$ml || 2}px;
  display: flex;
  justify-content: center;
`;

const PropSep = styled.i`
  width: 1px;
  height: 17px;
  margin-left: 5px;
  background: #ccc;
`;

const ObjectCombo = styled.div`
  height: 19px;
  margin-top: 2px;
  flex-shrink: 0;
  border: 1px solid #bbb;
  display: flex;
  justify-content: space-between;
`;

const ObjectText = styled.span`
  padding-left: 2px;
  line-height: 17px;
`;

const ObjectBtn = styled.span`
  width: 17px;
  background: #eee;
  display: flex;
  align-items: center;
  justify-content: center;
`;

const PropGrid = styled.div`
  height: 496px;
  margin-top: 3px;
  flex-shrink: 0;
  border: 1px solid #aaa;
  border-bottom-width: 2px;
  display: flex;
  overflow: hidden;
`;

const PropRows = styled.div`
  flex: 1;
  min-width: 0;
`;

const PropRow = styled.div`
  height: ${(p) => p.$h}px;
  display: flex;
  border-bottom: 1px solid #d8d8d8;
`;

const PropGutter = styled.div`
  width: 16px;
  flex-shrink: 0;
  border-right: 1px solid #aaa;
`;

const PropName = styled.div`
  width: 180px;
  flex-shrink: 0;
  padding-left: 18px;
  border-right: 1px solid #d8d8d8;
  background: ${(p) => (p.$hl ? '#cce4f7' : '#fff')};
  font-weight: 700;
  line-height: 18px;
  color: #333;
`;

const PropValue = styled.div`
  flex: 1;
  min-width: 0;
  padding-left: 3px;
  display: flex;
  align-items: center;
  color: #444;
  outline: ${(p) => (p.$editing ? '1px dotted #444' : '0')};
  outline-offset: -1px;
`;

const PropCheck = styled.i`
  width: 13px;
  height: 13px;
  margin-left: 89px;
  border: 1px solid #bbb;
  background: #fff;
  font: 11px/11px "DejaVu Sans", sans-serif;
  color: #444;
  text-align: center;
`;

const DescBox = styled.div`
  margin-top: 3px;
  flex: 1;
  padding: 3px 4px;
  background: #ffffe6;
  border: 1px solid #bbb;
  font-weight: 700;
  color: #333;
`;

// ---------- picked control on the design canvas ----------
const PickedField = styled.div`
  position: absolute;
  left: 970px;
  top: 292px;
  width: 300px;
  height: 21px;
  background: #fff;
  border: 1px solid #999;
  display: flex;
  padding-left: 41px;
`;

const PickedLabel = styled.span`
  width: 57px;
  line-height: 21px;
`;

const PickedInput = styled.div`
  width: 171px;
  height: 19px;
  border-left: 1px solid #aaa;
  border-bottom: 2px solid #aaa;
  display: flex;
  justify-content: flex-end;
`;

const Handle = styled.i`
  position: absolute;
  left: ${(p) => p.$x}px;
  top: ${(p) => p.$y}px;
  width: 6px;
  height: 6px;
  background: ${(p) => (p.$yellow ? '#ffee00' : '#fff')};
  border: 1px solid #111;
`;

const PickedCorner = styled.i`
  position: absolute;
  left: 1254px;
  top: 285px;
  width: 9px;
  height: 9px;
  background: #fff;
  border: 1px solid #111;
  font: 7px/7px "DejaVu Sans", sans-serif;
  color: #111;
`;

const HiddenWidget = styled.div`
  position: absolute;
  left: 1096px;
  top: 331px;
  width: 139px;
  height: 2px;
  background: #aaa;
`;

// ---------- dialog ----------
const Dialog = styled.div`
  position: absolute;
  left: 699px;
  top: 332px;
  width: 553px;
  height: 444px;
  padding: 0 6px 8px;
  background: #fafafa;
  border: 1px solid #1a6fb5;
  display: flex;
  flex-direction: column;
`;

const DialogHead = styled.div`
  height: 31px;
  flex-shrink: 0;
  display: flex;
  align-items: center;
  padding: 0 0 2px 3px;
`;

const DialogIcon = styled.span`
  margin-right: 5px;
`;

const DialogTitle = styled.span`
  flex: 1;
  font-size: 15px;
  color: #444;
`;

const DialogMin = styled.i`
  width: 6px;
  height: 2px;
  margin-top: 8px;
  background: #333;
`;

const DialogMax = styled.i`
  width: 10px;
  height: 8px;
  margin-left: 18px;
  border: 1px solid #333;
  border-top-width: 2px;
`;

const DialogClose = styled.div`
  width: 38px;
  height: 17px;
  margin-left: 12px;
  background: #c75050;
  color: #fff;
  font: 700 17px/16px "Liberation Sans", sans-serif;
  text-align: center;
`;

const DialogBody = styled.div`
  position: relative;
  flex: 1;
  background: #fff;
  border: 2px solid #d6d6d6;
`;

const DialogField = styled.div`
  margin: 9px 0 0 51px;
  display: flex;
  align-items: center;
  gap: 9px;
`;

const DialogLabel = styled.span`
  padding-top: 2px;
`;

const RadioLine = styled.div`
  margin: 35px 0 0 33px;
  display: flex;
  align-items: center;
  gap: 7px;
`;

const Radio = styled.i`
  width: 10px;
  height: 10px;
  border: 1px solid #aaa;
  border-radius: 50%;
  background: radial-gradient(circle, #222 0 2px, #fff 2.500px);
`;

const CodeLine = styled.div`
  margin: 9px 0 0 56px;
  display: flex;
  align-items: center;
  gap: 8px;
`;

const CodeInput = styled.div`
  width: 72px;
  height: 20px;
  padding: 2px 3px;
  border: 1px solid #aaa;
`;

const CodeSelected = styled.span`
  display: inline-block;
  background: #0a6fd0;
  color: #fff;
  line-height: 14px;
`;

const DialogFoot = styled.div`
  position: absolute;
  right: 23px;
  bottom: 7px;
  display: flex;
  gap: 11px;
  align-items: flex-end;
`;

const DialogBtn = styled.div`
  width: 70px;
  height: 21px;
  margin-bottom: ${(p) => (p.$up ? 1 : 0)}px;
  background: linear-gradient(#f2f2f2, #e2e2e2);
  border: 1px solid #aaa;
  text-align: center;
  line-height: 20px;
`;

const ResizeGrip = styled.i`
  position: absolute;
  right: 0;
  bottom: 0;
  width: 8px;
  height: 8px;
  background: radial-gradient(circle, #bbb 1px, transparent 1.200px) 0 0 / 3px 3px;
`;

// ---------- annotations ----------
const RedBox = styled.div`
  position: absolute;
  left: ${(p) => p.$x}px;
  top: ${(p) => p.$y}px;
  width: ${(p) => p.$w}px;
  height: ${(p) => p.$h}px;
  border: 2.500px solid #f33;
  pointer-events: none;
`;

const Arrows = styled.svg`
  position: absolute;
  left: 0;
  top: 0;
  pointer-events: none;
`;

const Note = styled.div`
  position: absolute;
  left: ${(p) => p.$x}px;
  top: ${(p) => p.$y}px;
  color: #f0f;
  font-family: "Liberation Sans", "Noto Sans CJK SC", sans-serif;
  font-size: 13px;
  word-spacing: 7px;
  white-space: nowrap;
`;

const ImeBar = styled.div`
  position: absolute;
  left: 1354px;
  top: 40px;
  width: 165px;
  height: 26px;
  padding: 0 4px 0 24px;
  background: #fff;
  border: 1px solid #b8d0e8;
  border-radius: 2px;
  display: flex;
  align-items: center;
  justify-content: space-between;
`;

const ImeLogo = styled.div`
  position: absolute;
  left: -9px;
  top: -4px;
  width: 28px;
  height: 29px;
  background: #f4511e;
  border-radius: 6px;
  transform: rotate(-9deg);
  display: flex;
  align-items: center;
  justify-content: center;
`;

const ImeS = styled.span`
  color: #fff;
  font: italic 700 25px/28px "Liberation Sans", sans-serif;
`;

const ImeChar = styled.span`
  color: #0a6fd0;
  font-weight: 700;
  font-size: ${(p) => (p.$small ? 12 : 15)}px;
`;

export default App;
